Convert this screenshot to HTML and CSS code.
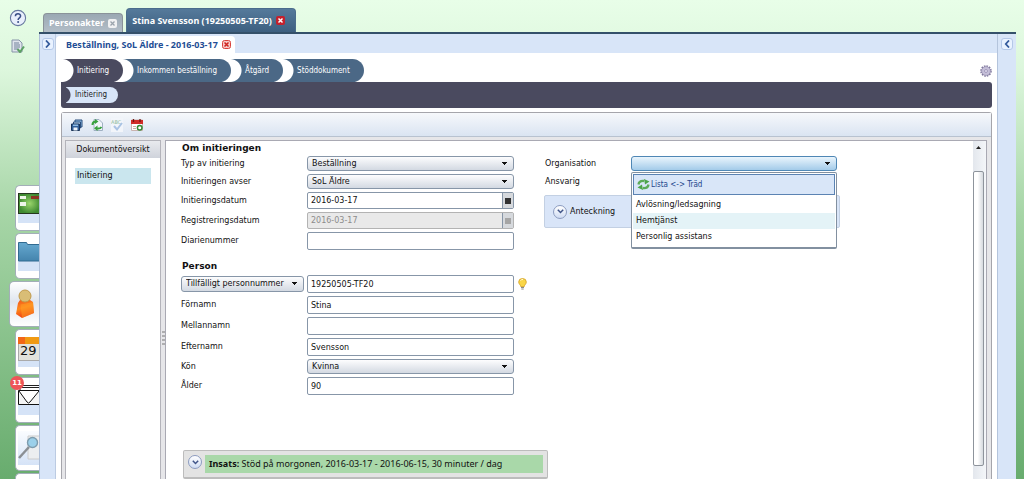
FILE: index.html
```html
<!DOCTYPE html>
<html lang="sv">
<head>
<meta charset="utf-8">
<meta name="viewport" content="width=device-width, initial-scale=1">
<title>Stina Svensson – Beställning, SoL Äldre</title>
<link rel="stylesheet" href="styles.css">
</head>
<body>
<div class="app">
  <nav class="rail" aria-label="Moduler">
    <div class="rail-tools">
      <button class="bare" type="button" aria-label="Hjälp"><svg width="18" height="18" viewBox="0 0 18 18"><circle cx="9" cy="9" r="7.6" fill="#e9effc" stroke="#66779f" stroke-width="1.1"/><path d="M6.4 7.2C6.4 4 11.6 4 11.6 7c0 1.800-2.500 1.900-2.500 4" fill="none" stroke="#3a4f86" stroke-width="1.5"/><circle cx="9.1" cy="13" r="1" fill="#3a4f86"/></svg></button>
      <button class="bare" type="button" aria-label="Dokument"><svg width="14" height="14" viewBox="0 0 14 14"><path d="M1 1h7l3 3v9H1z" fill="#dfe4ec" stroke="#8794a8"/><path d="M3 4h5M3 6h6M3 8h6M3 10h4" stroke="#71819a"/><path d="M6.500 10l2.500 3 4-5.500" fill="none" stroke="#5ba063" stroke-width="2"/></svg></button>
    </div>
    <div class="rail-tabs">
      <button class="rail-tab" type="button" aria-label="Översikt"><svg width="21" height="30" viewBox="0 0 21 30"><defs><radialGradient id="gr"><stop offset="0" stop-color="#9bd56c"/><stop offset="1" stop-color="#3f8a31"/></radialGradient></defs><rect y="20" width="21" height="10" fill="#d5e3f7"/><rect x=".5" y=".5" width="22" height="20" fill="url(#gr)" stroke="#26361f"/><path d="M2 3h6v3H2zM2 9h6v4H2z" fill="#eef5e8"/><path d="M13 3h8v3h-8z" fill="#8c3422"/></svg></button>
      <button class="rail-tab" type="button" aria-label="Mappar"><svg width="21" height="30" viewBox="0 0 21 30"><defs><linearGradient id="fo" x2="0" y2="1"><stop offset="0" stop-color="#66a9d0"/><stop offset="1" stop-color="#4484ad"/></linearGradient></defs><rect y="20" width="21" height="10" fill="#d5e3f7"/><path d="M.5 20V1.500h8l1 2H22V20z" fill="url(#fo)" stroke="#316b91"/></svg></button>
      <button class="rail-tab rail-active" type="button" aria-label="Personer"><svg width="20" height="32" viewBox="0 0 20 32"><defs><linearGradient id="pe" x2=".3" y2="1"><stop offset="0" stop-color="#f0531a"/><stop offset=".5" stop-color="#ff8a1c"/><stop offset="1" stop-color="#ee3f13"/></linearGradient></defs><path d="M3 15l2-3h10l3 2 1 11-12 5-6-4z" fill="url(#pe)"/><path d="M5.500 16.500L18 14l1 11-12 5z" fill="#ffa126" opacity=".5"/><circle cx="10" cy="8" r="6" fill="#d9bd76" stroke="#c29a49"/></svg></button>
      <button class="rail-tab" type="button" aria-label="Kalender"><svg width="21" height="30" viewBox="0 0 21 30"><rect y="23" width="21" height="7" fill="#d5e3f7"/><rect x=".5" y=".5" width="24" height="23" fill="#e2e2dc" stroke="#aaa"/><path d="M0 0h21v7H0z" fill="#f09a12"/><path d="M0 0h7v7H0z" fill="#f26717"/><text class="cal-text" x="2" y="18">29</text></svg></button>
      <button class="rail-tab" type="button" aria-label="Meddelanden, 11 nya"><span class="badge">11</span><svg width="21" height="30" viewBox="0 0 21 30"><rect y="20" width="21" height="10" fill="#d5e3f7"/><path d="M4 3V.5h18M2 6V2.500h20" fill="#fff" stroke="#222"/><path d="M.5 5.500h22v14H.5z" fill="#f4f4f4" stroke="#111"/><path d="M1 6l8 11q1.500 2 3 0l9-11" fill="#fff" stroke="#111"/></svg></button>
      <button class="rail-tab" type="button" aria-label="Sök"><svg width="21" height="34" viewBox="0 0 21 34"><defs><linearGradient id="se" x2="0" y2="1"><stop offset="0" stop-color="#fafcff"/><stop offset="1" stop-color="#d5e3f7"/></linearGradient></defs><rect width="21" height="34" fill="url(#se)"/><path d="M10 5h12v23H10z" fill="#eceef0" stroke="#ccc"/><path d="M1 27L11 16" stroke="#8b8f94" stroke-width="2.500"/><circle cx="14.500" cy="11.500" r="5" fill="#9bd0ea" stroke="#7d9cae" stroke-width="1.400"/></svg></button>
      <button class="rail-tab" type="button" aria-label="Mer"></button>
    </div>
  </nav>

  <div class="main">
    <div class="person-tabs">
      <div class="ptab">Personakter <button class="bare" type="button" aria-label="Stäng Personakter"><svg width="9" height="9" viewBox="0 0 9 9"><rect width="9" height="9" rx="2" fill="#f0f1f2"/><path d="M2.500 2.500l4 4m0-4l-4 4" stroke="#9aa3ac" stroke-width="1.300"/></svg></button></div>
      <div class="ptab ptab-on">Stina Svensson (19250505-TF20) <button class="bare" type="button" aria-label="Stäng Stina Svensson"><svg width="9" height="9" viewBox="0 0 9 9"><rect width="9" height="9" rx="2" fill="#c5202c"/><path d="M2.500 2.500l4 4m0-4l-4 4" stroke="#fff" stroke-width="1.500"/></svg></button></div>
    </div>
    <div class="workspace">
      <div class="strip strip-left"><button class="fold" type="button" aria-label="Visa vänster panel"><svg width="7" height="8" viewBox="0 0 7 8"><path d="M2 .5L5.200 4 2 7.500" fill="none" stroke="#335a9c" stroke-width="1.800"/></svg></button></div>
      <div class="content">
        <div class="doc-tabs"><div class="doc-tab">Beställning, SoL Äldre - 2016-03-17 <button class="bare" type="button" aria-label="Stäng beställning"><svg width="9" height="9" viewBox="0 0 9 9"><rect x=".5" y=".5" width="8" height="8" rx="2" fill="#f6c9c6" stroke="#d8423d"/><path d="M2.500 2.500l4 4m0-4l-4 4" stroke="#cf2420" stroke-width="1.500"/></svg></button></div></div>
        <div class="sheet">
          <div class="steps">
            <button class="step step-on" type="button">Initiering</button>
            <button class="step step-2" type="button">Inkommen beställning</button>
            <button class="step step-3" type="button">Åtgärd</button>
            <button class="step" type="button">Stöddokument</button>
            <button class="bare gear" type="button" aria-label="Inställningar"><svg width="12" height="12" viewBox="0 0 12 12"><circle cx="6" cy="6" r="5" fill="none" stroke="#81799f" stroke-width="1.600" stroke-dasharray="1.600 1"/><circle cx="6" cy="6" r="4.400" fill="#c5bfd9" stroke="#948cad" stroke-width=".7"/><circle cx="6" cy="6" r="1.500" fill="#e2dcf0" stroke="#9890b3" stroke-width=".8"/></svg></button>
          </div>
          <div class="substeps"><button class="substep" type="button">Initiering</button></div>

          <div class="panel">
            <div class="toolbar">
              <button class="bare" type="button" aria-label="Spara"><svg width="12" height="12" viewBox="0 0 12 12"><path d="M4 1h7v7H4z" fill="#8dbbe4" stroke="#2b4e7c"/><path d="M2.500 3h7v6h-7z" fill="#b8d4ef" stroke="#2b4e7c"/><path d="M.5 5h8v6.500h-8z" fill="#315f99" stroke="#1a3559"/><path d="M2.500 8.500h4v3h-4z" fill="#eef4fb"/><path d="M2 5.500h5v1.500H2z" fill="#8dbbe4"/></svg></button>
              <button class="bare" type="button" aria-label="Uppdatera"><svg width="12" height="12" viewBox="0 0 12 12"><path d="M3 .5h5l3.500 3.500v7.500H3z" fill="#f1f5fa" stroke="#9fb0c2"/><path d="M1.500 6Q1.500 2.500 4.500 2.500M6 9.500q3 .5 4.500-1.500" fill="none" stroke="#39a13e" stroke-width="2"/><path d="M4 0l3.500 2.500L4 5zM6.500 6.500V12L3 9.200z" fill="#39a13e"/></svg></button>
              <button class="bare spell" type="button" aria-label="Stavningskontroll" disabled><svg width="12" height="14" viewBox="0 0 12 14"><text class="abc-text" x="0" y="6">ABC</text><path d="M3 8l3 3.500L11 5" fill="none" stroke="#a9c3e4" stroke-width="2"/></svg></button>
              <button class="bare" type="button" aria-label="Bokning"><svg width="12" height="12" viewBox="0 0 12 12"><path d="M.5 1h11v10.500H.5z" fill="#fff" stroke="#c9b3b0"/><path d="M0 1h12v4H0z" fill="#d02b27"/><path d="M2.500 0v3M9 0v3" stroke="#701713" stroke-width="1.300"/><path d="M2 7.500h3M2 9.500h3" stroke="#d0a9a5"/><circle cx="8.700" cy="8.700" r="2.300" fill="#fff" stroke="#348a34" stroke-width="1.500"/></svg></button>
            </div>
            <div class="panel-body">
              <aside class="overview">
                <h2 class="overview-head">Dokumentöversikt</h2>
                <div class="overview-list"><a class="overview-item" href="#init">Initiering</a></div>
              </aside>
              <div class="splitter"><svg width="3" height="14" viewBox="0 0 3 14"><path d="M0 1h3M0 5h3M0 9h3M0 13h3" stroke="#777"/></svg></div>
              <form class="form" id="init">
                <div class="columns">
                  <div class="col">
                    <h3 class="section">Om initieringen</h3>
                    <div class="fields">
                      <div class="row"><label for="typ">Typ av initiering</label><select class="select" id="typ"><option>Beställning</option></select></div>
                      <div class="row"><label for="avser">Initieringen avser</label><select class="select" id="avser"><option>SoL Äldre</option></select></div>
                      <div class="row"><label for="idat">Initieringsdatum</label><div class="date"><input class="input" id="idat" type="text" value="2016-03-17"><button class="date-btn" type="button" aria-label="Välj datum"><span class="date-mark"></span></button></div></div>
                      <div class="row"><label for="rdat">Registreringsdatum</label><div class="date date-off"><input class="input" id="rdat" type="text" value="2016-03-17" disabled><button class="date-btn" type="button" aria-label="Välj datum" disabled><span class="date-mark"></span></button></div></div>
                      <div class="row"><label for="dnr">Diarienummer</label><input class="input" id="dnr" type="text"></div>
                    </div>
                    <h3 class="section section-next">Person</h3>
                    <div class="fields">
                      <div class="row"><select class="select pnr-type" aria-label="Typ av personnummer"><option>Tillfälligt personnummer</option></select><input class="input" type="text" aria-label="Personnummer" value="19250505-TF20"><svg class="bulb" width="9" height="12" viewBox="0 0 9 12"><path d="M2.700 8.500C2.700 6.800.7 6.200.7 4a3.800 3.500 0 0 1 7.600 0c0 2.200-2 2.800-2 4.500z" fill="#f9d648" stroke="#d3a021" stroke-width=".8"/><path d="M2.500 2.500q1-1.200 2.500-1" stroke="#fffbe0" fill="none"/><path d="M3 9.500h3M3.300 11h2.400" stroke="#8a8a8a"/></svg></div>
                      <div class="row"><label for="fn">Förnamn</label><input class="input" id="fn" type="text" value="Stina"></div>
                      <div class="row"><label for="mn">Mellannamn</label><input class="input" id="mn" type="text"></div>
                      <div class="row"><label for="en">Efternamn</label><input class="input" id="en" type="text" value="Svensson"></div>
                      <div class="row"><label for="kon">Kön</label><select class="select" id="kon"><option>Kvinna</option></select></div>
                      <div class="row"><label for="alder">Ålder</label><input class="input" id="alder" type="text" value="90"></div>
                    </div>
                  </div>
                  <div class="col col-org">
                    <div class="fields">
                      <div class="row row-org"><label for="org">Organisation</label><div class="combo"><select class="select select-open" id="org"><option></option></select>
                        <div class="menu">
                          <button class="menu-head" type="button"><svg width="13" height="11" viewBox="0 0 13 11"><path d="M1.500 5.500Q2 1.500 7 2M11.500 5.500Q11 9.500 6 9" fill="none" stroke="#5cab58" stroke-width="2.300"/><path d="M7 0l5.500 2.500L8 5.500zM6 11L.5 8.500 5 5.500z" fill="#4da44a"/></svg>Lista &lt;-&gt; Träd</button>
                          <ul class="menu-list"><li>Avlösning/ledsagning</li><li class="menu-hover">Hemtjänst</li><li>Personlig assistans</li></ul>
                        </div></div></div>
                      <div class="row row-org"><span>Ansvarig</span></div>
                    </div>
                    <div class="note"><button class="round" type="button" aria-label="Visa anteckning"><svg width="7" height="5" viewBox="0 0 7 5"><path d="M.8.8l2.700 2.700L6.200.8" fill="none" stroke="#3f5488" stroke-width="1.500"/></svg></button><span>Anteckning</span></div>
                  </div>
                </div>
                <div class="insats"><button class="round" type="button" aria-label="Visa insats"><svg width="7" height="5" viewBox="0 0 7 5"><path d="M.8.8l2.700 2.700L6.200.8" fill="none" stroke="#3f5488" stroke-width="1.500"/></svg></button><p class="insats-text"><strong>Insats:</strong> Stöd på morgonen, 2016-03-17 - 2016-06-15, 30 minuter / dag</p></div>
              </form>
              <div class="scroll"><svg class="scroll-up" width="5" height="3" viewBox="0 0 5 3"><path d="M2.500 0L5 3H0z" fill="#222"/></svg><div class="thumb"></div></div>
            </div>
          </div>
        </div>
      </div>
      <div class="strip strip-right"><button class="fold" type="button" aria-label="Visa höger panel"><svg width="7" height="8" viewBox="0 0 7 8"><path d="M5 .5L1.800 4 5 7.500" fill="none" stroke="#335a9c" stroke-width="1.800"/></svg></button></div>
    </div>
  </div>
</div>
</body>
</html>
```
FILE: styles.css
```css
* { box-sizing: border-box; }
body {
  margin: 0;
  font: 8px/12px "DejaVu Sans", Verdana, sans-serif;
  color: #111;
  background: linear-gradient(#e8fee8 0, #dcf6dc 15%, #a6d5a6 45%, #68ac6e 100%) fixed;
}
h2, h3, p, ul { margin: 0; padding: 0; }
button, input, select { font: inherit; color: inherit; margin: 0; }
button { padding: 0; }
svg { display: block; flex: none; }
.bare { border: 0; background: none; display: inline-flex; }

.app { display: flex; height: 100vh; overflow: hidden; }

/* left icon rail */
.rail { flex: none; width: 39px; display: flex; flex-direction: column; }
.rail-tools { display: flex; flex-direction: column; align-items: center; gap: 12px; padding: 9px 3px 0 0; height: 185px; flex: none; }
.rail-tabs { display: flex; flex-direction: column; align-items: flex-end; gap: 2px; }
.rail-tab {
  position: relative;
  display: flex; align-items: center; justify-content: flex-end;
  flex: none; width: 24px; height: 46px;
  border: 1px solid #a3aeb8; border-right: 0; border-radius: 5px 0 0 5px;
  background: #fff;
}
.rail-active { width: 30px; justify-content: center; background: linear-gradient(#fff, #dfe5ee 45%, #fff); }
.cal-text { font: 13px "DejaVu Sans", sans-serif; fill: #111; }
.badge {
  position: absolute; left: -6px; top: -2px;
  width: 14px; height: 14px; border-radius: 7px;
  background: #ee5558; color: #fff; font-size: 7px; line-height: 14px; text-align: center; font-weight: bold;
}

.main { flex: 1; min-width: 0; display: flex; flex-direction: column; padding-right: 8px; }

/* person tabs */
.person-tabs {
  display: flex; align-items: flex-end; gap: 3px;
  height: 34px; flex: none; padding-left: 4px;
  border-bottom: 2px solid #34506a;
  color: #fff;
}
.ptab, .doc-tab { font-family: "Noto Sans", "Open Sans", sans-serif; font-size: 9px; font-weight: bold; }
.ptab {
  display: flex; align-items: center; gap: 4px;
  height: 19px; padding: 0 5px;
  border: 1px solid #8a9299; border-bottom: 0; border-radius: 4px 4px 0 0;
  background: linear-gradient(#9aa8b3, #b3bec8);
}
.ptab-on { height: 24px; padding-right: 10px; border-color: #4b6d8c; background: linear-gradient(#557a9b, #3d5f80); }

/* workspace */
.workspace { flex: 1; min-height: 0; display: flex; background: #d8e5f8; border-left: 1px solid #aebfd8; }
.strip { flex: none; display: flex; flex-direction: column; align-items: center; padding-top: 4px; }
.strip-left { border-right: 1px solid #bccbe2; width: 16px; }
.strip-right { border-left: 1px solid #b4c4dc; width: 19px; }
.fold {
  display: flex; align-items: center; justify-content: center;
  width: 12px; height: 12px; border: 1px solid #b4c8e8; border-radius: 3px; background: #e9f2ff;
}
.content { flex: 1; min-width: 0; display: flex; flex-direction: column; }
.doc-tabs { flex: none; height: 19px; padding-top: 2px; display: flex; }
.doc-tab {
  display: flex; align-items: center; gap: 4px; padding: 0 4px 0 10px;
  background: #fff; border-radius: 4px 4px 0 0; color: #1f4e95;
}
.sheet { flex: 1; min-height: 0; display: flex; flex-direction: column; background: #fff; padding: 6px 5px 0; }

/* steps: each rounded end lies over the white notch of the next */
.steps { display: flex; flex: none; height: 23px; align-items: stretch; }
.step {
  position: relative; border: 0; color: #fff;
  padding: 0 14px 0 26px; margin-left: -12px;
  border-radius: 0 12px 12px 0;
  font-family: "DejaVu Sans Condensed", "DejaVu Sans", sans-serif;
  background:
    linear-gradient(#fff, #fff) 0 0 / 11px 100% no-repeat,
    radial-gradient(circle at 11px 50%, #fff 11px, #4b6886 12px);
}
.step-on { z-index: 3; margin-left: 0; padding-left: 16px; background: radial-gradient(circle at 1px 50%, #fff 11px, #4a4a5f 12px); }
.step-2 { z-index: 2; }
.step-3 { z-index: 1; }
.gear { margin: 6px 0 0 auto; height: 12px; }
.substeps {
  flex: none; height: 26px; padding: 5px 5px; display: flex;
  background: #4a4a5f; border-radius: 0 3px 3px 3px;
}
.substep {
  border: 0; border-radius: 0 8px 8px 0; padding: 0 11px 0 9px; color: #222;
  font-family: "DejaVu Sans Condensed", "DejaVu Sans", sans-serif;
  background: radial-gradient(circle at -4px 50%, #4a4a5f 8px, #d8e5f8 9px);
}

/* document panel */
.panel {
  flex: 1; min-height: 0; display: flex; flex-direction: column; margin-top: 4px;
  border: 1px solid #a5a5ab; border-bottom: 0; border-radius: 3px 3px 0 0; background: #e6e6e9;
}
.toolbar {
  flex: none; height: 24px; display: flex; align-items: center; gap: 8px; padding: 0 9px;
  border-bottom: 1px solid #b8c2d0; background: linear-gradient(#f6f8fb, #dae4f2);
}
.spell { background: #f2f5fa; }
.abc-text { font: 5px "DejaVu Sans", sans-serif; fill: #8fbb9a; }
.panel-body { flex: 1; min-height: 0; display: flex; padding: 3px 4px 0 3px; }
.overview { flex: none; width: 96px; display: flex; flex-direction: column; border: 1px solid #b3b3ba; border-bottom: 0; background: #fff; }
.overview-head {
  font-size: 8px; font-weight: normal; line-height: 17px; text-align: center;
  background: linear-gradient(#e9eaee, #cfd3db);
}
.overview-list { padding: 10px 9px 0 9px; }
.overview-item { display: block; line-height: 16px; padding-left: 2px; background: #cae6ee; color: #111; text-decoration: none; }
.splitter { flex: none; width: 4px; display: flex; align-items: center; justify-content: center; padding-top: 56px; }

/* form */
.form { flex: 1; min-width: 0; display: flex; flex-direction: column; background: #fff; border: solid #a9a9b3; border-width: 1px 0 0 1px; padding-left: 15px; }
.columns { display: flex; gap: 31px; }
.section { font-size: 9px; line-height: 14px; padding-left: 1px; margin-bottom: 1px; }
.section-next { margin-top: 9px; margin-bottom: 2px; }
.fields { display: flex; flex-direction: column; gap: 3px; }
.row { display: grid; grid-template-columns: 126px 207px; align-items: center; position: relative; }
.row-org { grid-template-columns: 86px 206px; min-height: 15px; }
/* the arrow is three stacked bars, over the face of the control */
.select {
  --face: linear-gradient(#fdfdfe, #d3d9e2);
  --ink: linear-gradient(#111, #111);
  appearance: none; width: 100%; height: 15px; padding: 0 16px 0 4px;
  border: 1px solid #8796a8; border-radius: 3px; outline: 0;
  background:
    var(--ink) right 6px top 5px / 5px 1px no-repeat,
    var(--ink) right 7px top 5px / 3px 2px no-repeat,
    var(--ink) right 8px top 5px / 1px 3px no-repeat,
    var(--face);
}
.select-open { --face: linear-gradient(#eaf5fd, #a3cbe9); border-color: #4f87b5; }
.input { width: 100%; height: 18px; padding: 0 3px; border: 1px solid #8796a8; border-radius: 2px; background: #fff; outline: 0; }
.pnr-type { width: 123px; height: 16px; }
.date { display: flex; height: 17px; border: 1px solid #8796a8; border-radius: 2px; background: #fff; }
.date .input { flex: 1; min-width: 0; height: 15px; border: 0; background: none; }
.date-btn { width: 11px; display: flex; align-items: center; justify-content: center; border: 0; border-left: 1px solid #8796a8; background: #d6d9dd; }
.date-mark { width: 6px; height: 6px; background: #333; }
.date-off { background: #e9e9e9; border-color: #b3b3b3; color: #8c8c8c; }
.date-off .date-mark { background: #a5a5a5; }
.bulb { position: absolute; left: 337px; top: 3px; }

/* organisation */
.col-org { padding-top: 15px; }
.combo { position: relative; }
.menu {
  position: absolute; z-index: 2; top: 16px; left: 0; width: 206px; padding: 1px;
  border: 1px solid #8290a0; border-bottom-width: 2px; border-radius: 2px; background: #fff;
}
.menu-head {
  width: 100%; height: 21px; display: flex; align-items: center; gap: 1px; padding-left: 3px;
  border: 1px solid #5b83b3; background: #d9e6f8; color: #23468c;
  font-family: "DejaVu Sans Condensed", "DejaVu Sans", sans-serif;
}
.menu-list { list-style: none; padding: 2px 0 1px; }
.menu-list li { padding-left: 3px; line-height: 16px; }
.menu-hover { background: #e4f3f7; }
.note {
  display: flex; align-items: center; gap: 3px; height: 33px; width: 296px; margin: 6px 0 0 -1px; padding-left: 8px;
  border: 1px solid #c3d0e3; border-radius: 2px; background: #d9e5f8;
}
.round {
  flex: none; width: 14px; height: 14px; display: flex; align-items: center; justify-content: center;
  border: 1px solid #8c9cc0; border-radius: 7px; background: linear-gradient(#fff, #cfdcf3);
}
.insats {
  display: flex; align-items: flex-start; gap: 3px; width: 365px; margin: 55px 0 0 2px; padding: 4px;
  border: 1px solid #bcbcbc; border-bottom-width: 2px; border-radius: 2px; background: #e3e3e3;
}
.insats-text {
  flex: 1; padding-left: 4px; background: #a9d8a9; white-space: nowrap;
  font: 9px/18px "Noto Sans", "Open Sans", sans-serif;
}

/* scroll area */
.scroll {
  flex: none; width: 16px; padding: 0 2px; display: flex; flex-direction: column;
  border: solid #a9a9b3; border-width: 1px 1px 0 0;
  background: linear-gradient(90deg, #fff 2px, #e3e7ed 2px, #f4f6f9);
}
.scroll-up { margin: 5px auto 22px; }
.thumb { height: 295px; flex: none; border: 1px solid #8e949c; border-radius: 2px; background: linear-gradient(90deg, #fff, #fff 40%, #d5d9de); }
```
